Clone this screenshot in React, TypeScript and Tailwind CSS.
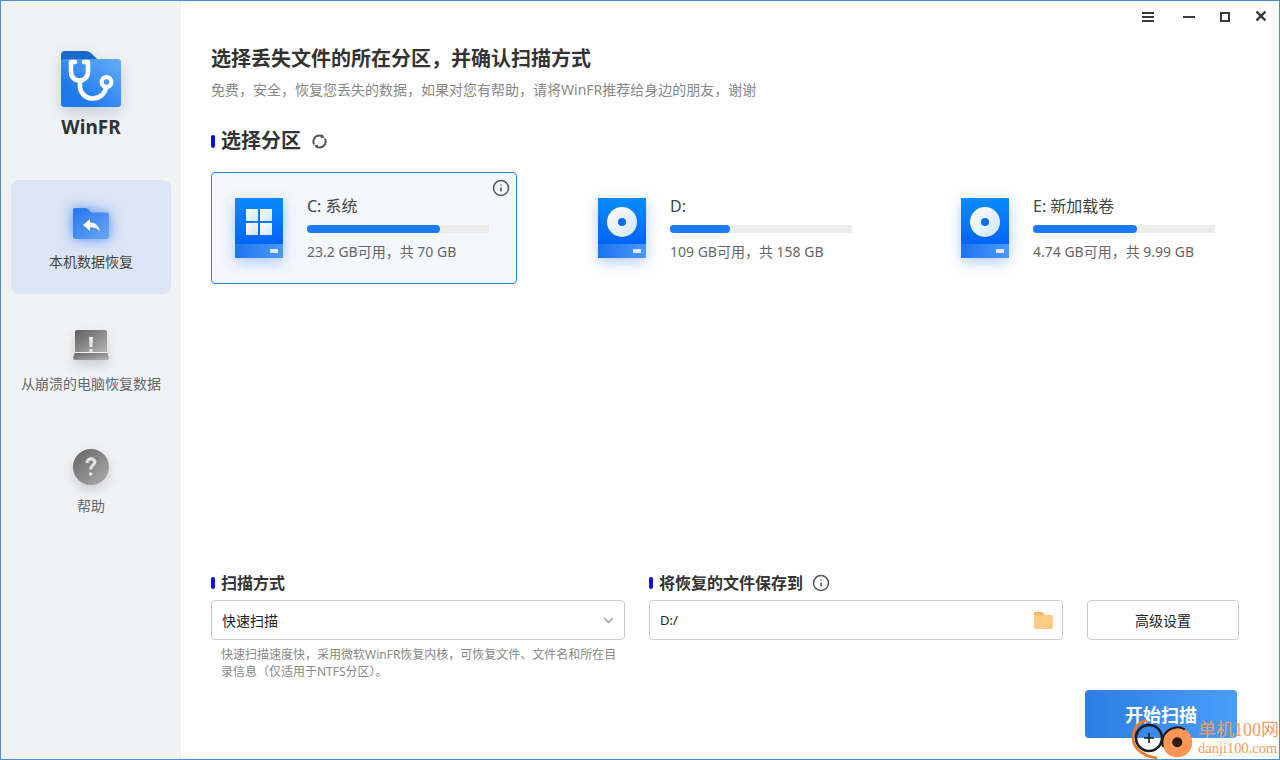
import React from 'react';
import { ChevronDown, Info } from 'lucide-react';

const FONT = "font-['Noto_Sans','Noto_Sans_CJK_SC',sans-serif]";

const LogoIcon = () => (
  <svg width="60" height="56" viewBox="0 0 60 56" className="drop-shadow-[0_6px_8px_rgba(60,80,120,0.22)]">
    <defs>
      <linearGradient id="logoFront" x1="0" y1="1" x2="1" y2="0">
        <stop offset="0.25" stopColor="#2079ea" />
        <stop offset="1" stopColor="#66aeff" />
      </linearGradient>
    </defs>
    <path d="M0 12V4a4 4 0 0 1 4-4h20c4 0 6 2 8 4l6 6v4H0z" fill="#1c69c9" />
    <rect x="0" y="8" width="60" height="48" rx="3" fill="url(#logoFront)" />
    <g fill="none" stroke="#fff" strokeWidth="4.6" strokeLinecap="round" strokeLinejoin="round">
      <path d="M14 11H10V21a8.500 8.500 0 0 0 17 0V11h-4" />
      <path d="M19 30v7a12.800 12.800 0 0 0 12.800 10.500c7 0 13.200-5 13.200-13" />
    </g>
    <circle cx="45.500" cy="31" r="7" fill="#fff" />
    <circle cx="45.500" cy="31" r="2.800" fill="#4a97f4" />
  </svg>
);

const RecoverIcon = () => (
  <svg width="36" height="32" viewBox="0 0 36 32" className="drop-shadow-[0_0_7px_rgba(40,110,255,0.75)]">
    <defs>
      <linearGradient id="recoverFill" x1="0" y1="0" x2="1" y2="1">
        <stop offset="0" stopColor="#2377ee" />
        <stop offset="1" stopColor="#6aa6f5" />
      </linearGradient>
    </defs>
    <path d="M0 2a2 2 0 0 1 2-2h10c2 0 3 1 4 2l2.500 2.500H34a2 2 0 0 1 2 2V29a2 2 0 0 1-2 2H2a2 2 0 0 1-2-2z" fill="url(#recoverFill)" />
    <path d="M10 17l7-6v3.500c5 0 9 3 10 9-2.500-3.200-5.500-4.200-10-4.200V23z" fill="#fff" />
  </svg>
);

const LaptopIcon = () => (
  <svg width="36" height="30" viewBox="0 0 36 30" className="drop-shadow-[0_6px_6px_rgba(60,60,60,0.2)]">
    <defs>
      <linearGradient id="laptopFill" x1="0" y1="0" x2="1" y2="1">
        <stop offset="0" stopColor="#5f5f5f" />
        <stop offset="1" stopColor="#b5b5b5" />
      </linearGradient>
    </defs>
    <path d="M2 2a2 2 0 0 1 2-2h28a2 2 0 0 1 2 2v20H2z" fill="url(#laptopFill)" />
    <path d="M2 22h32l2 6a2 2 0 0 1-2 2H2a2 2 0 0 1-2-2z" fill="url(#laptopFill)" />
    <rect x="2" y="22" width="32" height="1" fill="#f0f2f6" />
    <path d="M16 7h4l-.6 10h-2.800z" fill="#e8e8e8" />
    <circle cx="18" cy="20.500" r="1.800" fill="#e8e8e8" />
  </svg>
);

const HelpIcon = () => (
  <svg width="36" height="36" viewBox="0 0 36 36" className="-mt-[3px] drop-shadow-[0_5px_6px_rgba(60,60,60,0.2)]">
    <defs>
      <linearGradient id="helpFill" x1="0" y1="0" x2="1" y2="1">
        <stop offset="0" stopColor="#616161" />
        <stop offset="1" stopColor="#b0b0b0" />
      </linearGradient>
    </defs>
    <circle cx="18" cy="18" r="18" fill="url(#helpFill)" />
    <path d="M13 13.500c0-3 2.200-4.700 5-4.700s5 1.700 5 4.300c0 3.800-4.300 3.500-4.300 7h-2c0-4.500 3.800-4.300 3.800-7 0-1.300-1-2.200-2.500-2.200s-2.600 1-2.700 2.600z" fill="#e4e4e4" stroke="#e4e4e4" strokeWidth="1" />
    <circle cx="17.700" cy="25" r="1.800" fill="#e4e4e4" />
  </svg>
);

const RefreshIcon = () => (
  <svg width="15" height="15" viewBox="0 0 15 15" fill="none" stroke="#555" strokeWidth="2">
    <path d="M2.200 10.500A6 6 0 0 1 7.500 1.500c1.300 0 2.300.4 3.200 1" />
    <path d="M12.800 4.500A6 6 0 0 1 7.500 13.500c-1.300 0-2.300-.4-3.200-1" />
    <path d="M9.500 0l3.300 3.500-4 .8z" fill="#555" stroke="none" />
    <path d="M5.500 15l-3.300-3.500 4-.8z" fill="#555" stroke="none" />
  </svg>
);

const DriveBody = ({ id, children }: { id: string; children: React.ReactNode }) => (
  <svg width="48" height="60" viewBox="0 0 48 60" className="shrink-0 drop-shadow-[0_4px_7px_rgba(40,110,255,0.35)]">
    <defs>
      <linearGradient id={`${id}Top`} x1="0.500" y1="0" x2="0.500" y2="1">
        <stop offset="0" stopColor="#0a8cff" />
        <stop offset="1" stopColor="#0064f5" />
      </linearGradient>
      <linearGradient id={`${id}Base`} x1="0" y1="0" x2="1" y2="0">
        <stop offset="0" stopColor="#1c74f0" />
        <stop offset="1" stopColor="#4a99fa" />
      </linearGradient>
      <linearGradient id={`${id}Pane`} x1="0" y1="0" x2="1" y2="1">
        <stop offset="0" stopColor="#ffffff" />
        <stop offset="1" stopColor="#cfe4fb" />
      </linearGradient>
    </defs>
    <rect width="48" height="46" fill={`url(#${id}Top)`} />
    <rect y="46" width="48" height="14" fill={`url(#${id}Base)`} />
    <rect x="35" y="51" width="8" height="4" fill="#dbe9fb" />
    {children}
  </svg>
);

const SystemDrive = () => (
  <DriveBody id="sys">
    <rect x="11" y="11" width="12" height="12" fill="url(#sysPane)" />
    <rect x="25" y="11" width="12" height="12" fill="url(#sysPane)" />
    <rect x="11" y="25" width="12" height="12" fill="url(#sysPane)" />
    <rect x="25" y="25" width="12" height="12" fill="url(#sysPane)" />
  </DriveBody>
);

const DataDrive = ({ id }: { id: string }) => (
  <DriveBody id={id}>
    <circle cx="24" cy="24" r="15" fill={`url(#${id}Pane)`} />
    <circle cx="24" cy="24" r="4" fill="#0b6cf2" />
  </DriveBody>
);

const FolderIcon = () => (
  <svg width="19" height="17" viewBox="0 0 19 17">
    <path d="M0 1a1 1 0 0 1 1-1h7l3 3H0z" fill="#f9b65f" />
    <rect y="3" width="19" height="14" rx="1" fill="#fecb85" />
  </svg>
);

const WindowControls = () => (
  <div className="flex h-[31px] items-center justify-end pr-[13px] text-[#3a3a3a]">
    <svg width="12" height="10" viewBox="0 0 12 10" fill="currentColor">
      <rect width="12" height="2" />
      <rect y="4" width="12" height="2" />
      <rect y="8" width="12" height="2" />
    </svg>
    <svg width="12" height="2" viewBox="0 0 12 2" fill="currentColor" className="ml-[29px]">
      <rect width="12" height="2" />
    </svg>
    <svg width="10" height="10" viewBox="0 0 10 10" fill="none" stroke="currentColor" strokeWidth="2" className="ml-[25px]">
      <rect x="1" y="1" width="8" height="8" />
    </svg>
    <svg width="10" height="10" viewBox="0 0 10 10" stroke="currentColor" strokeWidth="2.400" className="-mt-[2px] ml-[26px]">
      <path d="M.5.500l9 9M9.500.500l-9 9" />
    </svg>
  </div>
);

const Watermark = () => (
  <div className="absolute bottom-0 right-0 flex items-end">
    <svg width="68" height="42" viewBox="0 0 68 42" className="shrink-0 overflow-visible">
      <path d="M17 4C8 4 3 12 3 21c0 10 9 18 24 20" fill="none" stroke="#f37a1f" strokeWidth="2.600" />
      <circle cx="19" cy="21" r="13" fill="none" stroke="#1d1d1d" strokeWidth="2.600" />
      <path d="M19 16v10M14 21h10" stroke="#1d1d1d" strokeWidth="1.600" />
      <circle cx="47.300" cy="25.300" r="15" fill="#fb9656" />
      <path d="M33 30a15 15 0 0 1 22-17.500" fill="none" stroke="#1d1d1d" strokeWidth="2" />
      <circle cx="47.300" cy="25.300" r="5" fill="#2a1a12" />
    </svg>
    <div className="mb-[3px] flex w-[81px] flex-col items-start font-['Liberation_Serif','Noto_Sans_CJK_SC',serif] text-[#fa9a60]">
      <span className="whitespace-nowrap text-lg leading-5">单机100网</span>
      <span className="whitespace-nowrap text-[14.500px] leading-4">danji100.com</span>
    </div>
  </div>
);

const navItems = [
  { label: '本机数据恢复', icon: <RecoverIcon />, active: true },
  { label: '从崩溃的电脑恢复数据', icon: <LaptopIcon />, active: false },
  { label: '帮助', icon: <HelpIcon />, active: false },
];

const partitions = [
  { name: 'C: 系统', used: 73, info: '23.2 GB可用，共 70 GB', icon: <SystemDrive />, selected: true },
  { name: 'D:', used: 33, info: '109 GB可用，共 158 GB', icon: <DataDrive id="d" />, selected: false },
  { name: 'E: 新加载卷', used: 57, info: '4.74 GB可用，共 9.99 GB', icon: <DataDrive id="e" />, selected: false },
];

const SectionTitle = ({ children, large }: { children: React.ReactNode; large?: boolean }) => (
  <div className="flex items-center">
    <span className={`mr-[6px] w-1 rounded-full bg-[#0a0aee] ${large ? 'h-[13px]' : 'h-3'}`} />
    <h2 className={`font-bold text-[#333] ${large ? 'text-xl leading-6' : 'text-base leading-5'}`}>{children}</h2>
  </div>
);

const App = () => {
  return (
    <div className={`${FONT} relative flex h-[760px] w-[1280px] overflow-hidden border border-[#4f8fd0] bg-white`}>
      <aside className="flex w-[180px] shrink-0 flex-col items-center bg-[#f0f2f6] pt-[50px]">
        <LogoIcon />
        <div className="mt-[8px] text-[19px] font-bold leading-6 text-[#333]">WinFR</div>
        <nav className="mt-[41px] flex flex-col gap-2">
          {navItems.map((item) => (
            <div
              key={item.label}
              className={`flex h-[114px] w-40 flex-col items-center rounded-lg pt-7 ${item.active ? 'bg-[#dce5f4]' : ''}`}
            >
              <div className="h-9">{item.icon}</div>
              <span className={`mt-[9px] whitespace-nowrap text-sm leading-[18px] ${item.active ? 'text-[#444]' : 'text-[#666]'}`}>
                {item.label}
              </span>
            </div>
          ))}
        </nav>
      </aside>

      <main className="flex min-w-0 flex-1 flex-col">
        <WindowControls />

        <div className="flex flex-1 flex-col pl-[30px] pr-10">
          <h1 className="mt-[13px] text-xl font-bold leading-7 text-[#333]">选择丢失文件的所在分区，并确认扫描方式</h1>
          <p className="mt-[7px] text-sm leading-5 text-[#888]">
            免费，安全，恢复您丢失的数据，如果对您有帮助，请将WinFR推荐给身边的朋友，谢谢
          </p>

          <div className="mt-[29px] flex items-center gap-[11px]">
            <SectionTitle large>选择分区</SectionTitle>
            <RefreshIcon />
          </div>

          <div className="mt-[19px] grid grid-cols-[306px_306px_306px] gap-x-[57px]">
            {partitions.map((partition) => (
              <div
                key={partition.name}
                className={`relative flex h-28 items-center gap-6 rounded border pl-[23px] ${
                  partition.selected ? 'border-[#1f7ff5] bg-[#f4f7fc]' : 'border-transparent'
                }`}
              >
                {partition.icon}
                {partition.selected && (
                  <Info size={18} strokeWidth={2} className="absolute right-[6px] top-[6px] text-[#555]" />
                )}
                <div className="flex w-[182px] flex-col pt-[2px]">
                  <span className="text-base leading-5 text-[#444]">{partition.name}</span>
                  <div className="mt-[9px] h-2 bg-[#ececec]">
                    <div className="h-2 rounded-sm bg-[#1b7bfb]" style={{ width: `${partition.used}%` }} />
                  </div>
                  <span className="mt-[9px] whitespace-nowrap text-sm leading-5 text-[#666]">{partition.info}</span>
                </div>
              </div>
            ))}
          </div>

          <div className="mt-[289px] grid grid-cols-[414px_414px_152px] gap-x-6">
            <div className="flex h-5 items-center"><SectionTitle>扫描方式</SectionTitle></div>
            <div className="flex h-5 items-center gap-[9px]">
              <SectionTitle>将恢复的文件保存到</SectionTitle>
              <Info size={18} strokeWidth={2} className="text-[#555]" />
            </div>
            <div />

            <div className="mt-[7px] flex h-10 items-center justify-between rounded border border-[#c9c9c9] pl-[10px] pr-[8px] text-sm text-[#222]">
              <span className="mt-[2px]">快速扫描</span>
              <ChevronDown size={15} strokeWidth={3} className="text-[#a8adb5]" />
            </div>
            <div className="mt-[7px] flex h-10 items-center justify-between rounded border border-[#c9c9c9] pl-[10px] pr-[9px] text-[13px] text-[#222]">
              <span className="mt-[2px]">D:/</span>
              <FolderIcon />
            </div>
            <div className="mt-[7px] flex h-10 items-center justify-center rounded border border-[#c9c9c9] pt-[2px] text-sm text-[#222]">
              高级设置
            </div>

            <p className="mt-[6px] pl-[10px] text-xs leading-[17px] text-[#888]">
              快速扫描速度快，采用微软WinFR恢复内核，可恢复文件、文件名和所在目录信息（仅适用于NTFS分区）。
            </p>
          </div>

          <div className="mt-[10px] flex justify-end pr-[2px]">
            <button className="h-12 w-[152px] rounded bg-gradient-to-r from-[#2e7de4] to-[#4b9efa] pt-[2px] text-lg font-bold text-white">
              开始扫描
            </button>
          </div>
        </div>
      </main>

      <Watermark />
    </div>
  );
};

export default App;
